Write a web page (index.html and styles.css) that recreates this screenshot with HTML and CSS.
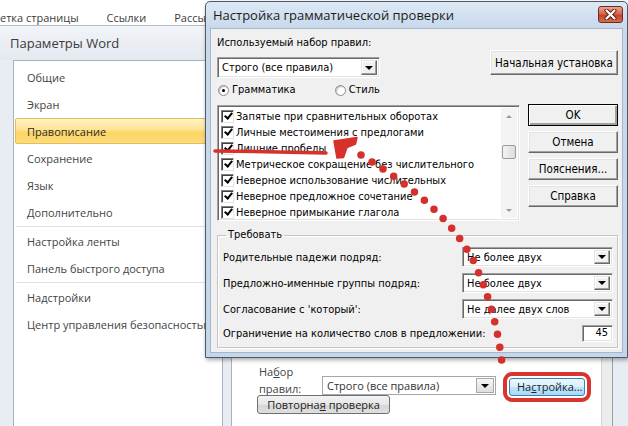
FILE: index.html
```html
<!DOCTYPE html>
<html lang="ru">
<head>
    <meta charset="UTF-8">
    <title>Параметры Word</title>
    <link rel="stylesheet" href="styles.css">
</head>
<body>
<div class="screen">
    <div class="ribbon-tabs">
        <span class="tab">етка страницы</span>
        <span class="tab">Ссылки</span>
        <span class="tab">Рассылки</span>
    </div>

    <div class="options">
        <div class="options-title">Параметры Word</div>
        <div class="options-body">
            <ul class="nav">
                <li>Общие</li>
                <li>Экран</li>
                <li class="active">Правописание</li>
                <li>Сохранение</li>
                <li>Язык</li>
                <li>Дополнительно</li>
                <li class="sep"></li>
                <li>Настройка ленты</li>
                <li>Панель быстрого доступа</li>
                <li class="sep"></li>
                <li>Надстройки</li>
                <li>Центр управления безопасностью</li>
            </ul>
            <div class="page">
                <div class="page-content">
                    <div class="rules-row">
                        <label class="rules-label">На<u>б</u>ор<br>правил:</label>
                        <div class="w7-select">
                            <span>Строго (все правила)</span>
                            <span class="w7-arrow"></span>
                        </div>
                        <button class="w7-btn w7-hot">На<u>с</u>тройка...</button>
                    </div>
                    <button class="w7-btn w7-recheck">Повторна<u>я</u> проверка</button>
                </div>
                <div class="page-scroll"><span class="page-scroll-up"></span></div>
            </div>
        </div>
    </div>

    <!-- grammar settings dialog on top of the options window -->
    <div class="dialog">
        <div class="dlg-title">
            <span>Настройка грамматической проверки</span>
            <span class="dlg-close">
                <svg width="13" height="11" viewBox="0 0 13 11">
                    <path d="M2.5 1.5 L10.5 9.5 M10.5 1.5 L2.5 9.5" stroke="#5a1a10" stroke-width="4" stroke-linecap="round"/>
                    <path d="M2.5 1.5 L10.5 9.5 M10.5 1.5 L2.5 9.5" stroke="#fff" stroke-width="2.2" stroke-linecap="round"/>
                </svg>
            </span>
        </div>
        <div class="dlg-body">
            <div class="dlg-top">
                <div class="rules-set">
                    <div class="dlg-label">Используемый набор правил:</div>
                    <div class="combo combo-rules">
                        <span class="combo-text">Строго (все правила)</span>
                        <span class="combo-btn"></span>
                    </div>
                </div>
                <button class="btn btn-reset">Начальная установка</button>
            </div>

            <div class="radios">
                <span class="radio-item"><span class="radio checked"></span>Грамматика</span>
                <span class="radio-item"><span class="radio"></span>Стиль</span>
            </div>

            <div class="dlg-main">
                <div class="listbox">
                    <ul class="check-list">
                        <li><span class="chk"></span>Запятые при сравнительных оборотах</li>
                        <li><span class="chk"></span>Личные местоимения с предлогами</li>
                        <li><span class="chk"></span>Лишние пробелы</li>
                        <li><span class="chk"></span>Метрическое сокращение без числительного</li>
                        <li><span class="chk"></span>Неверное использование числительных</li>
                        <li><span class="chk"></span>Неверное предложное сочетание</li>
                        <li><span class="chk"></span>Неверное примыкание глагола</li>
                    </ul>
                    <div class="vscroll">
                        <span class="vs-arrow vs-up"></span>
                        <span class="vs-track"><span class="vs-thumb"></span></span>
                        <span class="vs-arrow vs-down"></span>
                    </div>
                </div>
                <div class="dlg-buttons">
                    <button class="btn btn-default">OK</button>
                    <button class="btn">Отмена</button>
                    <button class="btn">Пояснения...</button>
                    <button class="btn">Справка</button>
                </div>
            </div>

            <fieldset class="require">
                <legend>Требовать</legend>
                <div class="req-row">
                    <span>Родительные падежи подряд:</span>
                    <div class="combo combo-req"><span class="combo-text">Не более двух</span><span class="combo-btn"></span></div>
                </div>
                <div class="req-row">
                    <span>Предложно-именные группы подряд:</span>
                    <div class="combo combo-req"><span class="combo-text">Не более двух</span><span class="combo-btn"></span></div>
                </div>
                <div class="req-row">
                    <span>Согласование с 'который':</span>
                    <div class="combo combo-req"><span class="combo-text">Не далее двух слов</span><span class="combo-btn"></span></div>
                </div>
                <div class="req-row req-last">
                    <span>Ограничение на количество слов в предложении:</span>
                    <span class="num-field">45</span>
                </div>
            </fieldset>
        </div>
    </div>

    <!-- red hand-drawn marks: underline, arrow and dotted path -->
    <svg class="marks" width="628" height="426" viewBox="0 0 628 426">
        <path d="M215 151 Q270 151.5 326 153" fill="none" stroke="#d8302a" stroke-width="3.5" stroke-linecap="round"/>
        <path d="M334 141 L357 137.5 L355.5 144 L347 147.5 L343.5 157.5 L337 158 Z" fill="#d8302a" stroke="#d8302a" stroke-width="1.5" stroke-linejoin="round"/>
        <path d="M361 155 C410 185 452 218 474 262 C490 298 499 330 503 373" fill="none" stroke="#d5302b" stroke-width="7.5" stroke-linecap="round" stroke-dasharray="0 13"/>
    </svg>
</div>
</body>
</html>
```

FILE: styles.css
```css
* {
    box-sizing: border-box;
}
html, body {
    margin: 0;
}
body {
    width: 628px;
    height: 426px;
    overflow: hidden;
    background: #fff;
    font-family: "Open Sans", "Noto Sans", sans-serif;
    color: #3a3a3a;
}
.screen {
    position: relative;
    width: 628px;
    height: 426px;
    overflow: hidden;
}

/* ribbon tabs behind the options window */
.ribbon-tabs {
    width: 205px;
    height: 25px;
    display: flex;
    gap: 28px;
    padding-top: 11px;
    overflow-x: clip;
    font-size: 11px;
    line-height: 14px;
    color: #3c3c3c;
    background: #fff;
    white-space: nowrap;
}

/* Word options window */
.options {
    height: 401px;
    display: flex;
    flex-direction: column;
    border-top: 1px solid #b4bcc8;
    background: #e8edf3;
}
.options-title {
    height: 34px;
    padding-left: 10px;
    font-size: 13px;
    line-height: 34px;
    color: #3b3b3b;
    background: linear-gradient(#f1f4f8, #e4e9f0);
}
.options-body {
    flex: 1;
    display: flex;
    gap: 8px;
    padding-left: 13px;
}
.nav {
    width: 210px;
    margin: 0;
    padding: 3px 1px 0;
    list-style: none;
    background: #fff;
    border: 1px solid #a9b1bc;
    border-bottom: 0;
    font-size: 11px;
    color: #444;
}
.nav li {
    height: 26px;
    margin-bottom: 1px;
    padding-left: 11px;
    line-height: 26px;
    white-space: nowrap;
    border: 1px solid transparent;
    border-radius: 2px;
}
.nav li.active {
    color: #2c2c2c;
    border-color: #e2bd5a;
    background: linear-gradient(#fff3c4, #fee493 45%, #fcd664 55%, #fddc7a);
}
.nav li.sep {
    height: 1px;
    margin: 0 1px 1px;
    padding: 0;
    border: 0;
    background: #e1e1e1;
}

.page {
    width: 382px;
    display: flex;
    background: #fff;
    border-left: 1px solid #a9b1bc;
}
.page-content {
    flex: 1;
    display: flex;
    flex-direction: column;
    justify-content: flex-end;
    padding: 0 0 12px 27px;
    font-size: 11px;
    color: #333;
}
.rules-row {
    height: 32px;
    display: flex;
    align-items: flex-start;
}
.rules-label {
    width: 63px;
    line-height: 17px;
    color: #444;
}
.w7-select {
    width: 174px;
    height: 19px;
    margin-top: 13px;
    display: flex;
    align-items: center;
    padding-left: 4px;
    border: 1px solid #a4a8ae;
    background: #fff;
}
.w7-select span:first-child {
    flex: 1;
}
.w7-arrow {
    width: 18px;
    height: 15px;
    margin-right: 1px;
    display: flex;
    align-items: center;
    justify-content: center;
    border: 1px solid #a9a9a9;
    background: linear-gradient(#f6f6f6, #dedede);
}
.w7-arrow::after,
.combo-btn::after {
    content: "";
    border-left: 4px solid transparent;
    border-right: 4px solid transparent;
    border-top: 4px solid #000;
}
.w7-btn {
    font: inherit;
    color: #222;
    height: 19px;
    padding: 0 7px;
    border: 1px solid #707070;
    border-radius: 3px;
    background: linear-gradient(#f3f3f3, #e6e6e6 50%, #d6d6d6 50%, #dedede);
    line-height: 16px;
}
.w7-hot {
    width: 76px;
    height: 18px;
    margin: 15px 0 0 13px;
    border-color: #3c7fb1;
    background: linear-gradient(#eaf6fd, #d9f0fc 50%, #bee6fd 50%, #a7d9f5);
    outline: 4px solid #d7352d;
    outline-offset: 2px;
}
.w7-recheck {
    align-self: flex-start;
    width: 133px;
    margin-left: -2px;
}
.page-scroll {
    width: 12px;
    background: #ececec;
    border-left: 1px solid #d5d5d5;
    border-right: 1px solid #99a1ac;
}
.page-scroll-up {
    display: block;
    height: 6px;
    background: #cfcfcf;
}

/* grammar dialog */
.dialog {
    position: absolute;
    left: 205px;
    top: 1px;
    width: 423px;
    height: 357px;
    display: flex;
    flex-direction: column;
    padding: 0 4px 4px;
    border: 1px solid #4f5866;
    border-radius: 5px 5px 0 0;
    background: linear-gradient(#dde8f4, #c8d9ec 26px, #c4d6ea);
    box-shadow: 1px 2px 4px rgba(0, 0, 0, 0.35);
    font-family: "DejaVu Sans Condensed", "Liberation Sans", sans-serif;
    font-size: 11px;
    color: #000;
}
.dlg-title {
    height: 26px;
    display: flex;
    align-items: center;
    justify-content: space-between;
    padding-left: 3px;
    font-family: "Open Sans", "Noto Sans", sans-serif;
    font-size: 13px;
    color: #1b1b1b;
}
.dlg-close {
    width: 25px;
    height: 17px;
    margin-top: -2px;
    display: flex;
    align-items: center;
    justify-content: center;
    border: 1px solid #6e2a1f;
    border-radius: 3px;
    background: linear-gradient(#eaa595, #d5674f 45%, #c4432b 55%, #d5704f);
}
.dlg-body {
    flex: 1;
    padding: 7px 4px 0 6px;
    background: #f0f0f0;
    border: 1px solid #a7b6c9;
}
.dlg-top {
    display: flex;
    justify-content: space-between;
}
.dlg-label {
    line-height: 14px;
}
.combo {
    height: 21px;
    display: flex;
    align-items: stretch;
    padding: 2px;
    background: #fff;
    border: 1px solid;
    border-color: #a0a0a0 #fff #fff #a0a0a0;
    box-shadow: inset 1px 1px 0 #696969, inset -1px -1px 0 #e3e3e3;
}
.combo-rules {
    width: 163px;
    margin-top: 7px;
}
.combo-text {
    flex: 1;
    padding-left: 2px;
    line-height: 15px;
    white-space: nowrap;
}
.combo-btn {
    width: 16px;
    display: flex;
    align-items: center;
    justify-content: center;
    background: #f0f0f0;
    border: 1px solid;
    border-color: #e3e3e3 #696969 #696969 #e3e3e3;
    box-shadow: inset -1px -1px 0 #a0a0a0, inset 1px 1px 0 #fff;
}
.btn {
    font: inherit;
    color: #000;
    padding: 0;
    background: #f0f0f0;
    border: 1px solid;
    border-color: #fff #696969 #696969 #fff;
    box-shadow: inset -1px -1px 0 #a0a0a0, inset 1px 1px 0 #e3e3e3;
}
.btn-reset {
    width: 128px;
    height: 25px;
    margin-top: 14px;
    font-size: 11.5px;
}
.btn-default {
    border-color: #000;
    box-shadow: inset 1px 1px 0 #fff, inset -2px -2px 0 #a0a0a0;
}

.radios {
    height: 14px;
    margin-top: 5px;
    display: flex;
    line-height: 14px;
}
.radio-item {
    display: flex;
    align-items: center;
    gap: 3px;
}
.radio-item + .radio-item {
    margin-left: 38px;
}
.radio {
    width: 11px;
    height: 11px;
    margin-left: 1px;
    border-radius: 50%;
    border: 1px solid #8d8d8d;
    background: #fff;
    box-shadow: inset 1px 1px 1px #bdbdbd;
    display: flex;
    align-items: center;
    justify-content: center;
}
.radio.checked::after {
    content: "";
    width: 3px;
    height: 3px;
    border-radius: 50%;
    background: #000;
}

.dlg-main {
    margin-top: 8px;
    display: flex;
    gap: 8px;
}
.listbox {
    flex: 1;
    height: 116px;
    display: flex;
    padding: 2px;
    background: #fff;
    border: 1px solid;
    border-color: #a0a0a0 #fff #fff #a0a0a0;
    box-shadow: inset 1px 1px 0 #696969, inset -1px -1px 0 #e3e3e3;
}
.check-list {
    flex: 1;
    margin: 0;
    padding: 0;
    list-style: none;
}
.check-list li {
    height: 16px;
    display: flex;
    align-items: center;
    white-space: nowrap;
}
.chk {
    width: 13px;
    height: 13px;
    margin: 0 2px 0 1px;
    display: flex;
    align-items: center;
    justify-content: center;
    background: #fff;
    border: 1px solid;
    border-color: #808080 #e3e3e3 #e3e3e3 #808080;
    box-shadow: inset 1px 1px 0 #404040;
}
.chk::after {
    content: "";
    width: 3px;
    height: 6px;
    margin: -2px 0 0 1px;
    border: solid #000;
    border-width: 0 2px 2px 0;
    transform: rotate(40deg);
}
.vscroll {
    width: 16px;
    display: flex;
    flex-direction: column;
    background: #f4f4f4;
}
.vs-arrow {
    height: 16px;
    display: flex;
    align-items: center;
    justify-content: center;
}
.vs-up::after,
.vs-down::after {
    content: "";
    border-left: 3px solid transparent;
    border-right: 3px solid transparent;
}
.vs-up::after {
    border-bottom: 3px solid #9a9a9a;
}
.vs-down::after {
    border-top: 3px solid #9a9a9a;
}
.vs-track {
    flex: 1;
    padding-top: 21px;
}
.vs-thumb {
    display: block;
    width: 14px;
    height: 14px;
    margin-left: 1px;
    border: 1px solid #9b9b9b;
    border-radius: 2px;
    background: linear-gradient(90deg, #f3f3f3, #dcdcdc);
}
.dlg-buttons {
    width: 90px;
    display: flex;
    flex-direction: column;
    gap: 5px;
    margin-top: -1px;
}
.dlg-buttons .btn {
    height: 22px;
    font-size: 11.5px;
}

.require {
    margin: 7px 0 0;
    padding: 2px 4px 2px 4px;
    min-width: 0;
    border: 1px solid #c5c5c5;
    box-shadow: 1px 1px 0 #fff, inset 1px 1px 0 #fff;
}
.require legend {
    margin-left: 4px;
    padding: 0 2px;
    line-height: 14px;
}
.req-row {
    height: 26px;
    display: flex;
    align-items: center;
    justify-content: space-between;
    padding-left: 1px;
}
.req-row.req-last {
    height: 23px;
}
.combo-req {
    width: 151px;
    height: 20px;
}
.num-field {
    width: 31px;
    height: 17px;
    padding-right: 4px;
    text-align: right;
    line-height: 14px;
    background: #fff;
    border: 1px solid;
    border-color: #a0a0a0 #fff #fff #a0a0a0;
    box-shadow: inset 1px 1px 0 #696969, inset -1px -1px 0 #e3e3e3;
}

/* hand-drawn annotation layer */
.marks {
    position: absolute;
    left: 0;
    top: 0;
    pointer-events: none;
}
```
